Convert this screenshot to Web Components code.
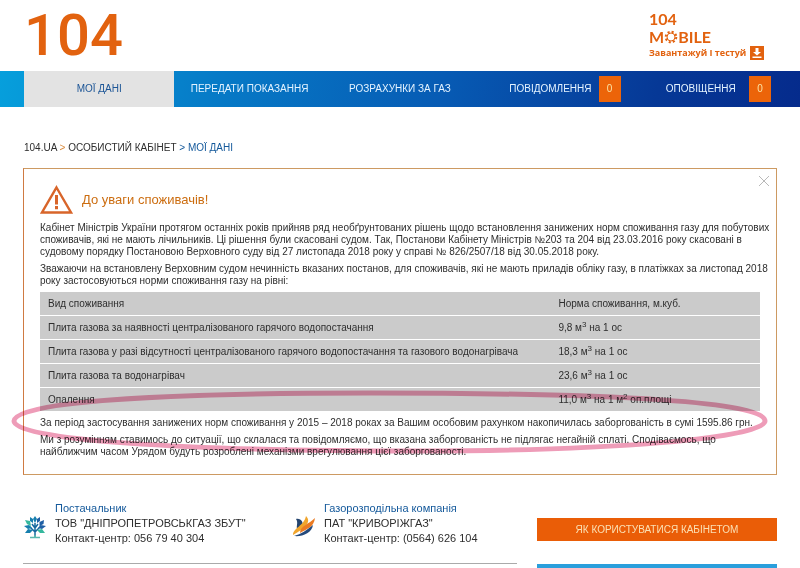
<!DOCTYPE html>
<html lang="uk">
<head>
<meta charset="utf-8">
<title>104.UA - Особистий кабінет</title>
<style>
    body {
        margin: 0;
        background: #fff;
        color: #2e2e2e;
        font-family: 'Liberation Sans', Arial, sans-serif;
    }
</style>
</head>
<body>
<cabinet-page></cabinet-page>

<script>
class SiteHeader extends HTMLElement {
    constructor() {
        super();
        this.attachShadow({ mode: 'open' });
        this.shadowRoot.innerHTML = `
            <style>
                * { box-sizing: border-box; }

                :host {
                    display: flex;
                    justify-content: space-between;
                    align-items: flex-start;
                    height: 71px;
                    padding: 0 24px;
                    color: #e2620f;
                }

                a {
                    color: inherit;
                    text-decoration: none;
                }

                .logo {
                    display: block;
                    font: 500 58px/70px Roboto, sans-serif;
                }

                .mobile {
                    width: 127px;
                    padding-top: 10px;
                    font: 700 16px/18px Lato, sans-serif;
                }

                .name {
                    display: flex;
                    align-items: center;
                    height: 17px;
                }

                .slogan {
                    display: flex;
                    align-items: center;
                    gap: 4px;
                    font: 700 9px/16px 'Open Sans', sans-serif;
                    white-space: nowrap;
                }

                svg { display: block; }
            </style>

            <a class="logo" href="#">104</a>
            <a class="mobile" href="#">
                <div>104</div>
                <div class="name">M<svg width="14" height="14" viewBox="0 0 14 14" role="img" aria-label="O" fill="none" stroke="currentColor">
                    <circle cx="7" cy="7" r="4" stroke-width="1" />
                    <circle cx="7" cy="7" r="5.3" stroke-width="2" stroke-dasharray="2.1 2.06" />
                </svg>BILE</div>
                <div class="slogan">
                    <span>Завантажуй І тестуй</span>
                    <svg width="14" height="14" viewBox="0 0 14 14">
                        <rect width="14" height="14" fill="#e2620f" />
                        <path d="M5.500 2h3v4H11L7 9.500 3 6h2.500zM2.500 10.500h9V12h-9z" fill="#fff" />
                    </svg>
                </div>
            </a>
        `;
    }
}
customElements.define('site-header', SiteHeader);

class NavItem extends HTMLElement {
    constructor() {
        super();
        this.attachShadow({ mode: 'open' });
        this.shadowRoot.innerHTML = `
            <style>
                :host {
                    display: block;
                    position: relative;
                    color: #e4f3ff;
                }

                :host([active]) {
                    background: #e3e3e3;
                    color: #1c5596;
                }

                a {
                    display: block;
                    color: inherit;
                    font-size: 10px;
                    line-height: 36px;
                    text-align: center;
                    text-decoration: none;
                    white-space: nowrap;
                }

                .badge {
                    position: absolute;
                    top: 5px;
                    right: 5px;
                    width: 22px;
                    background: #ec6409;
                    color: #fbe3a4;
                    font-size: 10px;
                    line-height: 26px;
                    text-align: center;
                }
            </style>
            <a href="#"><slot></slot></a>
        `;
    }

    connectedCallback() {
        const count = this.getAttribute('count');
        if (count !== null) {
            const badge = document.createElement('span');
            badge.className = 'badge';
            badge.textContent = count;
            this.shadowRoot.appendChild(badge);
        }
    }
}
customElements.define('nav-item', NavItem);

class MainNav extends HTMLElement {
    constructor() {
        super();
        this.attachShadow({ mode: 'open' });
        this.shadowRoot.innerHTML = `
            <style>
                :host {
                    display: block;
                    padding: 0 24px;
                    background: linear-gradient(100deg, #069fdc 0%, #0679c6 28%, #075bb4 55%, #063896 82%, #052b8c 100%);
                }

                nav {
                    display: grid;
                    grid-template-columns: repeat(5, 1fr);
                }
            </style>
            <nav>
                <nav-item active>МОЇ ДАНІ</nav-item>
                <nav-item>ПЕРЕДАТИ ПОКАЗАННЯ</nav-item>
                <nav-item>РОЗРАХУНКИ ЗА ГАЗ</nav-item>
                <nav-item count="0">ПОВІДОМЛЕННЯ</nav-item>
                <nav-item count="0">ОПОВІЩЕННЯ</nav-item>
            </nav>
        `;
    }
}
customElements.define('main-nav', MainNav);

class BreadCrumbs extends HTMLElement {
    constructor() {
        super();
        this.attachShadow({ mode: 'open' });
        this.shadowRoot.innerHTML = `
            <style>
                :host {
                    display: block;
                    font-size: 10px;
                    line-height: 12px;
                }

                a {
                    color: inherit;
                    text-decoration: none;
                }

                .sep { color: #d98a3c; }
                .current, .sep.last { color: #14599b; }
            </style>
            <a href="#">104.UA</a>
            <span class="sep">&gt;</span>
            <a href="#">ОСОБИСТИЙ КАБІНЕТ</a>
            <span class="sep last">&gt;</span>
            <span class="current">МОЇ ДАНІ</span>
        `;
    }
}
customElements.define('bread-crumbs', BreadCrumbs);

class NormTable extends HTMLElement {
    constructor() {
        super();
        this.attachShadow({ mode: 'open' });
        this.shadowRoot.innerHTML = `
            <style>
                :host { display: block; }

                table {
                    width: 100%;
                    border-collapse: collapse;
                    table-layout: fixed;
                    background: #cbcbcb;
                    font-size: 10px;
                    line-height: 12px;
                }

                th, td {
                    height: 23px;
                    padding: 0 8px;
                    border-bottom: 1px solid #fff;
                    font-weight: normal;
                    text-align: left;
                    white-space: nowrap;
                }

                th:last-child { width: 28%; padding-right: 0; }
                sup { font-size: 8px; line-height: 0; }
            </style>
            <table>
                <thead>
                    <tr><th>Вид споживання</th><th>Норма споживання, м.куб.</th></tr>
                </thead>
                <tbody>
                    <tr><td>Плита газова за наявності централізованого гарячого водопостачання</td><td>9,8 м<sup>3</sup> на 1 ос</td></tr>
                    <tr><td>Плита газова у разі відсутності централізованого гарячого водопостачання та газового водонагрівача</td><td>18,3 м<sup>3</sup> на 1 ос</td></tr>
                    <tr><td>Плита газова та водонагрівач</td><td>23,6 м<sup>3</sup> на 1 ос</td></tr>
                    <tr><td>Опалення</td><td>11,0 м<sup>3</sup> на 1 м<sup>2</sup> оп.площі</td></tr>
                </tbody>
            </table>
        `;
    }
}
customElements.define('norm-table', NormTable);

class NoticeCard extends HTMLElement {
    constructor() {
        super();
        this.attachShadow({ mode: 'open' });
        this.shadowRoot.innerHTML = `
            <style>
                :host {
                    display: block;
                    position: relative;
                    padding: 16px 16px 11px;
                    border: 1px solid #cd9a62;
                    border-left-color: #cf7a42;
                }

                header {
                    display: flex;
                    align-items: center;
                    gap: 9px;
                    margin-bottom: 8px;
                }

                h1 {
                    margin: 0;
                    color: #cc6d10;
                    font-size: 13px;
                    font-weight: normal;
                    line-height: 16px;
                }

                .close {
                    position: absolute;
                    top: 6px;
                    right: 6px;
                    width: 12px;
                    height: 12px;
                    padding: 0;
                    border: 0;
                    background: none;
                    cursor: pointer;
                }

                .mark {
                    position: absolute;
                    left: -13px;
                    right: 8px;
                    bottom: 20px;
                    height: 64px;
                    mix-blend-mode: multiply;
                    pointer-events: none;
                }

                svg { display: block; }
                .mark svg { width: 100%; height: 100%; }
            </style>
            <header>
                <svg width="33" height="29" viewBox="0 0 33 29" fill="none" stroke="#d8652a">
                    <path d="M16.500 2.500 31 27.500H2z" stroke-width="2.400" />
                    <path d="M16.500 10v9.500M16.500 21v3.200" stroke-width="3" />
                </svg>
                <h1>До уваги споживачів!</h1>
            </header>
            <slot></slot>
            <button class="close" aria-label="Закрити">
                <svg width="12" height="12" viewBox="0 0 12 12" stroke="#b8b8b8"><path d="M1 1l10 10M11 1L1 11" /></svg>
            </button>
            <div class="mark">
                <svg viewBox="0 0 758 64" preserveAspectRatio="none" fill="none" stroke="#ee9cb8" stroke-width="5">
                    <path d="M3 31C3 14 120 3 360 3 610 3 755 12 755 31 755 48 600 61 410 61 170 61 3 50 3 31z" />
                </svg>
            </div>
        `;
    }
}
customElements.define('notice-card', NoticeCard);

class NoticeText extends HTMLElement {
    constructor() {
        super();
        this.attachShadow({ mode: 'open' });
        this.shadowRoot.innerHTML = `
            <style>
                :host {
                    display: block;
                    margin: 5px 0;
                    font-size: 10px;
                    line-height: 12px;
                    white-space: nowrap;
                }
            </style>
            <slot></slot>
        `;
    }
}
customElements.define('notice-text', NoticeText);

class CompanyContact extends HTMLElement {
    constructor() {
        super();
        this.attachShadow({ mode: 'open' });
        this.shadowRoot.innerHTML = `
            <style>
                :host {
                    display: flex;
                    align-items: center;
                    gap: 8px;
                    font-size: 11px;
                    line-height: 15px;
                    white-space: nowrap;
                }

                ::slotted(svg) { display: block; margin-top: 6px; }
                ::slotted(h2) {
                    margin: 0;
                    color: #14599b;
                    font-size: 11px;
                    font-weight: normal;
                }
            </style>
            <slot name="icon"></slot>
            <div>
                <slot name="title"></slot>
                <slot></slot>
            </div>
        `;
    }
}
customElements.define('company-contact', CompanyContact);

class CabinetPage extends HTMLElement {
    constructor() {
        super();
        this.attachShadow({ mode: 'open' });
        this.shadowRoot.innerHTML = `
            <style>
                :host {
                    display: block;
                    height: 100vh;
                    overflow: hidden;
                }

                main {
                    padding: 35px 23px 0;
                }

                bread-crumbs { margin-bottom: 14px; padding-left: 1px; }

                .bottom {
                    display: grid;
                    grid-template-columns: 1fr 240px;
                    align-items: start;
                    gap: 20px;
                    margin-top: 26px;
                }

                .contacts {
                    display: grid;
                    grid-template-columns: 269px 1fr;
                    padding-bottom: 17px;
                    border-bottom: 1px solid #aaa;
                }

                aside { padding-top: 17px; }

                button {
                    display: block;
                    width: 100%;
                    height: 23px;
                    margin-bottom: 23px;
                    padding: 0;
                    border: 0;
                    background: #ea5d07;
                    color: #fbe0b4;
                    font: 10px 'Liberation Sans', Arial, sans-serif;
                }

                .banner {
                    height: 23px;
                    background: #2a9fdc;
                }
            </style>
            <site-header></site-header>
            <main-nav></main-nav>
            <main>
                <bread-crumbs></bread-crumbs>
                <notice-card>
                    <notice-text>Кабінет Міністрів України протягом останніх років прийняв ряд необґрунтованих рішень щодо встановлення занижених норм споживання газу для побутових<br>споживачів, які не мають лічильників. Ці рішення були скасовані судом. Так, Постанови Кабінету Міністрів №203 та 204 від 23.03.2016 року скасовані в<br>судовому порядку Постановою Верховного суду від 27 листопада 2018 року у справі № 826/2507/18 від 30.05.2018 року.</notice-text>
                    <notice-text>Зважаючи на встановлену Верховним судом нечинність вказаних постанов, для споживачів, які не мають приладів обліку газу, в платіжках за листопад 2018<br>року застосовуються норми споживання газу на рівні:</notice-text>
                    <norm-table></norm-table>
                    <notice-text>За період застосування занижених норм споживання у 2015 – 2018 роках за Вашим особовим рахунком накопичилась заборгованість в сумі 1595.86 грн.</notice-text>
                    <notice-text>Ми з розумінням ставимось до ситуації, що склалася та повідомляємо, що вказана заборгованість не підлягає негайній сплаті. Сподіваємось, що<br>найближчим часом Урядом будуть розроблені механізми врегулювання цієї заборгованості.</notice-text>
                </notice-card>
                <div class="bottom">
                    <div class="contacts">
                        <company-contact>
                            <svg slot="icon" width="24" height="24" viewBox="0 0 24 24" fill="none" stroke-width="1.500">
                                <path d="M12 21V8M12 17 6 11M12 17l6-6M12 13 9 9M12 13l3-4" stroke="#17699f" />
                                <path d="M7 22.500h10M11 21h2" stroke="#57b8ae" />
                                <g stroke="none">
                                    <path d="M12 1l2 3-2 4-2-4zM7 2l3 2v4L7 6zM1 11l5-1 3 3-4 1zM2 18l3-4 5 1-3 3z" fill="#167fae" />
                                    <path d="M17 2l-3 2v4L17 6zM21 5l-.5 4-4 2v-4zM23 11l-5-1-3 3 4 1z" fill="#1e5fa5" />
                                    <path d="M2 5l5 1 1 5-4-2zM22 18l-3-4-5 1 3 3z" fill="#35b89d" />
                                </g>
                            </svg>
                            <h2 slot="title">Постачальник</h2>
                            <div>ТОВ "ДНІПРОПЕТРОВСЬКГАЗ ЗБУТ"</div>
                            <div>Контакт-центр: 056 79 40 304</div>
                        </company-contact>
                        <company-contact>
                            <svg slot="icon" width="24" height="24" viewBox="0 0 24 24">
                                <path d="M4 4C9 3 12 7 10 12L6 16C3 12 7 8 4 4z" fill="#25456f" />
                                <path d="M14 1C20 7 13 13 1 20 1 13 12 11 14 1z" fill="#f0a52d" />
                                <path d="M23 3C22 12 15 14 8 18 8 11 17 9 23 3z" fill="#ea7b23" />
                                <path d="M21 10C20 18 10 22 2 21 9 19 15 15 21 10z" fill="#244a7c" />
                            </svg>
                            <h2 slot="title">Газорозподільна компанія</h2>
                            <div>ПАТ "КРИВОРІЖГАЗ"</div>
                            <div>Контакт-центр: (0564) 626 104</div>
                        </company-contact>
                    </div>
                    <aside>
                        <button>ЯК КОРИСТУВАТИСЯ КАБІНЕТОМ</button>
                        <div class="banner"></div>
                    </aside>
                </div>
            </main>
        `;
    }
}
customElements.define('cabinet-page', CabinetPage);
</script>
</body>
</html>
